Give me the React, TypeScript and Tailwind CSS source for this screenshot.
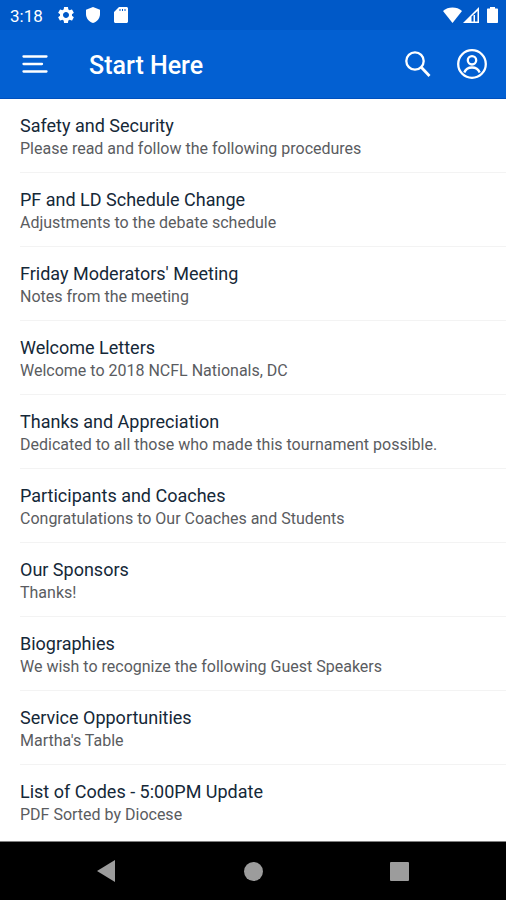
import React from 'react';

interface Entry {
    title: string;
    subtitle: string;
}

const entries: Entry[] = [
    { title: 'Safety and Security', subtitle: 'Please read and follow the following procedures' },
    { title: 'PF and LD Schedule Change', subtitle: 'Adjustments to the debate schedule' },
    { title: "Friday Moderators' Meeting", subtitle: 'Notes from the meeting' },
    { title: 'Welcome Letters', subtitle: 'Welcome to 2018 NCFL Nationals, DC' },
    { title: 'Thanks and Appreciation', subtitle: 'Dedicated to all those who made this tournament possible.' },
    { title: 'Participants and Coaches', subtitle: 'Congratulations to Our Coaches and Students' },
    { title: 'Our Sponsors', subtitle: 'Thanks!' },
    { title: 'Biographies', subtitle: 'We wish to recognize the following Guest Speakers' },
    { title: 'Service Opportunities', subtitle: "Martha's Table" },
    { title: 'List of Codes - 5:00PM Update', subtitle: 'PDF Sorted by Diocese' },
];

const StatusBar: React.FC = () => (
    <div className="flex h-[30px] items-center justify-between bg-[#0059c8] pr-2 pl-[10px] text-white">
        <div className="flex items-center">
            <span className="w-[46px] pt-[2px] text-[17px] leading-5">3:18</span>
            <svg className="h-5 w-5" viewBox="0 0 24 24" fill="currentColor">
                <path d="M19.14 12.94c.04-.3.06-.61.06-.94 0-.32-.02-.64-.07-.94l2.03-1.58c.18-.14.23-.41.12-.61l-1.92-3.32c-.12-.22-.37-.29-.59-.22l-2.39.96c-.5-.38-1.03-.7-1.62-.94l-.36-2.54c-.04-.24-.24-.41-.48-.41h-3.84c-.24 0-.43.17-.47.41l-.36 2.54c-.59.24-1.13.57-1.62.94l-2.39-.96c-.22-.08-.47 0-.59.22L2.74 8.87c-.12.21-.08.47.12.61l2.03 1.58c-.05.3-.09.63-.09.94s.02.64.07.94l-2.03 1.58c-.18.14-.23.41-.12.61l1.92 3.32c.12.22.37.29.59.22l2.39-.96c.5.38 1.03.7 1.62.94l.36 2.54c.05.24.24.41.48.41h3.84c.24 0 .44-.17.47-.41l.36-2.54c.59-.24 1.13-.56 1.62-.94l2.39.96c.22.08.47 0 .59-.22l1.92-3.32c.12-.22.07-.47-.12-.61l-2.01-1.58zM12 15.6c-1.98 0-3.6-1.62-3.6-3.6s1.62-3.6 3.6-3.6 3.6 1.62 3.6 3.6-1.62 3.6-3.6 3.6z" />
            </svg>
            <svg className="ml-[10px] h-4 w-[14px]" viewBox="0 0 14 16" fill="currentColor">
                <path d="M7 0 14 2.8V7c0 4.2-3 7.9-7 9-4-1.1-7-4.8-7-9V2.8z" />
            </svg>
            <svg className="ml-[14px] h-4 w-[14px]" viewBox="0 0 14 16" fill="currentColor">
                <path fillRule="evenodd" d="M5 0h7.5C13.3 0 14 .7 14 1.5v13c0 .8-.7 1.5-1.5 1.5h-11C.7 16 0 15.3 0 14.5V5zM5.500 2v2h1V2zM8 2v2h1V2zM10.500 2v2h1V2z" />
            </svg>
        </div>
        <div className="flex items-center">
            <svg className="h-4 w-[19px]" viewBox="0 0 19 16" fill="currentColor">
                <path d="M9.5 16 0 4C2.6 1.6 6 .5 9.5.5S16.4 1.6 19 4z" />
            </svg>
            <svg className="ml-[1px] h-4 w-4" viewBox="0 0 16 16" fill="currentColor">
                <path fillRule="evenodd" d="M16 0v16H0zM14.5 4 8.5 9.500V14.500h6z" />
                <path d="M10.500 8h1.500v7h-1.500z" />
            </svg>
            <svg className="ml-2 h-4 w-[11px]" viewBox="0 0 11 16" fill="currentColor">
                <path d="M3 0h5v1.5h2c.6 0 1 .4 1 1V15c0 .6-.4 1-1 1H1c-.6 0-1-.4-1-1V2.5c0-.6.4-1 1-1h2z" />
            </svg>
        </div>
    </div>
);

const Header: React.FC = () => (
    <header className="bg-[#0360d2] text-white">
        <StatusBar />
        <div className="flex h-[69px] items-center border-b border-[#0050bd] pr-[18px] pl-[22px]">
            <button type="button" aria-label="Menu">
                <svg className="h-5 w-[26px]" viewBox="0 0 26 20" fill="none" stroke="currentColor" strokeWidth="2.3" strokeLinecap="round">
                    <path d="M1.5 2.5h23M1.5 10h18.5M1.5 17.5h23" />
                </svg>
            </button>
            <h1 className="ml-[41px] flex-1 pt-1 text-[25px] leading-8 font-medium">Start Here</h1>
            <button type="button" aria-label="Search">
                <svg className="h-7 w-7" viewBox="0 0 28 28" fill="none" stroke="currentColor" strokeWidth="2.3">
                    <circle cx="11" cy="11" r="8.7" />
                    <path d="m17.5 17.5 8 8.5" strokeWidth="2.8" />
                </svg>
            </button>
            <button type="button" aria-label="Account" className="ml-6">
                <svg className="h-8 w-8" viewBox="0 0 32 32" fill="none" stroke="currentColor" strokeWidth="2.3">
                    <circle cx="16" cy="16" r="13.8" />
                    <circle cx="16" cy="12.3" r="4.2" />
                    <path d="M8.3 24.5c1.3-3.3 4.2-5 7.7-5s6.4 1.7 7.7 5" />
                </svg>
            </button>
        </div>
    </header>
);

const NavigationBar: React.FC = () => (
    <nav className="mt-auto grid h-[59px] grid-cols-[1fr_auto_1fr] items-center border-t border-[#808080] bg-black text-[#9c9c9c]">
        <button type="button" aria-label="Back" className="mr-[129px] justify-self-end">
            <svg className="h-[22px] w-[18px]" viewBox="0 0 18 22" fill="currentColor">
                <path d="M18 0v22L0 11z" />
            </svg>
        </button>
        <button type="button" aria-label="Home" className="h-[19px] w-[19px] rounded-full bg-current" />
        <button type="button" aria-label="Recent apps" className="ml-[127px] h-[19px] w-[19px] rounded-[1px] bg-current" />
    </nav>
);

const App: React.FC = () => {
    return (
        <div className="flex min-h-screen flex-col bg-white font-['Roboto',sans-serif]">
            <Header />
            <main>
                <ul className="pl-5">
                    {entries.map(({ title, subtitle }) => (
                        <li key={title} className="border-b border-[#f3f3f3] last:border-transparent">
                            <a href="#" className="block pt-[15px] pb-3">
                                <h2 className="text-[18px] leading-6 text-[#152838]">{title}</h2>
                                <p className="text-[16px] leading-[22px] text-[#5a5c5f]">{subtitle}</p>
                            </a>
                        </li>
                    ))}
                </ul>
            </main>
            <NavigationBar />
        </div>
    );
};

export default App;
